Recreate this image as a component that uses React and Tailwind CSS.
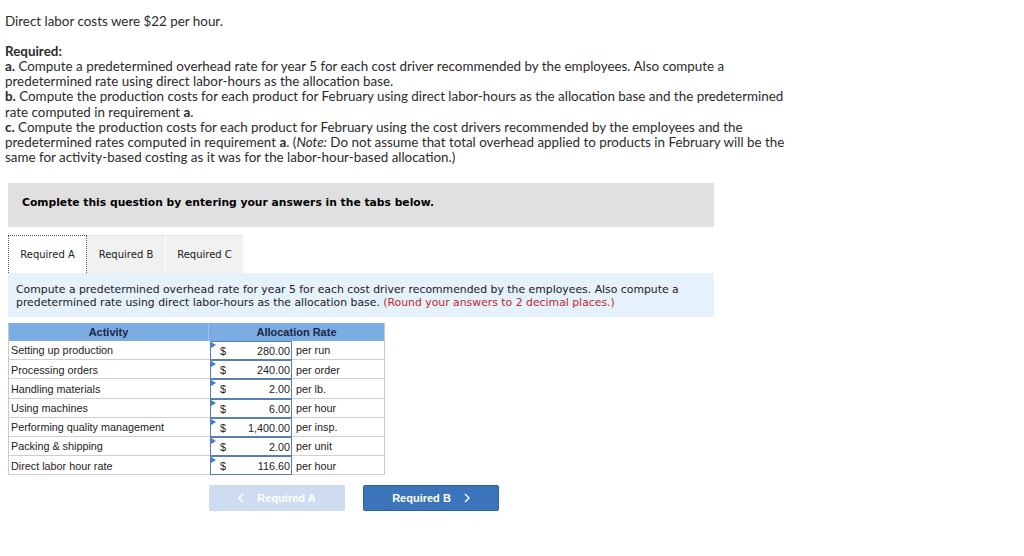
import React from "react";

const rows = [
  ["Setting up production", "280.00", "per run"],
  ["Processing orders", "240.00", "per order"],
  ["Handling materials", "2.00", "per lb."],
  ["Using machines", "6.00", "per hour"],
  ["Performing quality management", "1,400.00", "per insp."],
  ["Packing & shipping", "2.00", "per unit"],
  ["Direct labor hour rate", "116.60", "per hour"],
];

function Chevron({ dir }) {
  return (
    <svg width="6" height="10" viewBox="0 0 6 10" fill="none" stroke="currentColor" strokeWidth="1.4">
      {dir === "left" ? <polyline points="5,1 1,5 5,9" /> : <polyline points="1,1 5,5 1,9" />}
    </svg>
  );
}

export default function App() {
  return (
    <div className="w-[1024px] h-[556px] bg-white text-[#222] overflow-hidden">
      <div className="pl-[5px] pt-[14px] font-['Lato','Liberation_Sans',sans-serif] text-[13.4px] leading-[15.1px] text-[#2b2b2b]">
        <p>Direct labor costs were $22 per hour.</p>
        <p className="mt-[15.1px] font-bold">Required:</p>
        <p>
          <b>a.</b> Compute a predetermined overhead rate for year 5 for each cost driver recommended by the employees. Also compute a
          <br />
          predetermined rate using direct labor-hours as the allocation base.
        </p>
        <p>
          <b>b.</b> Compute the production costs for each product for February using direct labor-hours as the allocation base and the predetermined
          <br />
          rate computed in requirement <b>a</b>.
        </p>
        <p>
          <b>c.</b> Compute the production costs for each product for February using the cost drivers recommended by the employees and the
          <br />
          predetermined rates computed in requirement <b>a</b>. (<i>Note:</i> Do not assume that total overhead applied to products in February will be the
          <br />
          same for activity-based costing as it was for the labor-hour-based allocation.)
        </p>
      </div>

      <div className="ml-[8px] w-[706px]">
        <div className="mt-[18px] h-[44px] bg-[#e0e0e0] pl-[14px] pt-[12px] font-['DejaVu_Sans',Verdana,sans-serif] text-[10.75px] font-bold text-black">
          Complete this question by entering your answers in the tabs below.
        </div>

        <div className="mt-[8px] flex h-[38px] font-['DejaVu_Sans',Verdana,sans-serif] text-[10px] text-[#222]">
          <div className="flex w-[79px] items-center justify-center border-x border-t border-dotted border-[#555] bg-white">
            Required A
          </div>
          <div className="flex w-[78px] items-center justify-center border-t border-[#e4e4e4] bg-[#f1f1f1]">
            Required B
          </div>
          <div className="ml-px flex w-[77px] items-center justify-center border-t border-[#e4e4e4] bg-[#f1f1f1]">
            Required C
          </div>
        </div>

        <div className="h-[44px] bg-[#e5f1fb] pl-[8px] pt-[10px] font-['DejaVu_Sans',Verdana,sans-serif] text-[10.85px] leading-[13px] text-[#222]">
          Compute a predetermined overhead rate for year 5 for each cost driver recommended by the employees. Also compute a
          <br />
          predetermined rate using direct labor-hours as the allocation base.{" "}
          <span className="text-[#c0282d]">(Round your answers to 2 decimal places.)</span>
        </div>

        <div className="mt-[6px] w-[377px] border-x border-[#c9c9c9] font-['Liberation_Sans',Arial,sans-serif] text-[10.8px] text-[#222]">
          <div className="flex h-[18px] bg-[#7badE4] text-[11px] font-bold text-[#1a2744]">
            <div className="flex w-[200px] items-center justify-center border-r border-[#9cc2ec]">Activity</div>
            <div className="flex flex-1 items-center justify-center">Allocation Rate</div>
          </div>
          {rows.map(([name, val, unit]) => (
            <div key={name} className="flex h-[19.2px] border-b border-[#cfcfcf]">
              <div className="flex w-[201px] items-center pl-[2px] pt-px">{name}</div>
              <div className="relative -mb-px flex w-[82px] items-center border border-[#5a7fb3] bg-white pl-[9px] pr-[1px] pt-px">
                <span className="absolute left-0 top-0 h-0 w-0 border-y-[3px] border-l-[5px] border-y-transparent border-l-[#3b7dd8]" />
                <span>$</span>
                <span className="ml-auto">{val}</span>
              </div>
              <div className="flex items-center pl-[4px] pt-px">{unit}</div>
            </div>
          ))}
        </div>

        <div className="mt-[10px] flex pl-[201px] font-['Liberation_Sans',Arial,sans-serif] text-[11px] font-bold text-white">
          <div className="flex h-[26px] w-[136px] items-center justify-center gap-[13px] rounded-[2px] bg-[#cddcef]">
            <Chevron dir="left" />
            <span>Required A</span>
          </div>
          <div className="ml-[18px] flex h-[26px] w-[136px] items-center justify-center gap-[13px] rounded-[2px] border border-[#2f63a6] bg-[#3b74bb]">
            <span>Required B</span>
            <Chevron dir="right" />
          </div>
        </div>
      </div>
    </div>
  );
}
